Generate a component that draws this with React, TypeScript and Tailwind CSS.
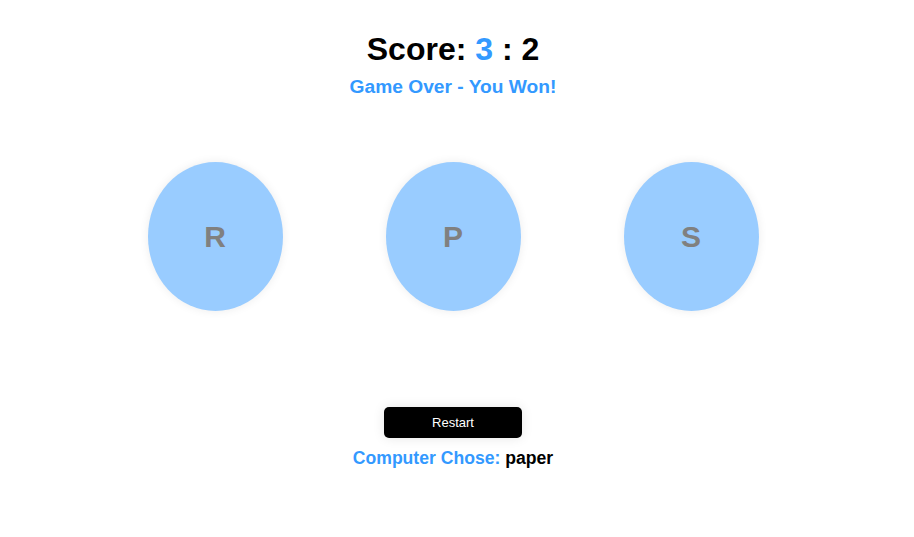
import { useState } from "react";

const choices = ["R", "P", "S"];

const App: React.FC = () => {
  const [score] = useState({ player: 3, computer: 2 });
  const [computerChoice] = useState("paper");

  return (
    <div className="min-h-screen bg-white font-['Liberation_Sans',Arial,sans-serif]">
      <div className="w-[906px] flex flex-col items-center pt-[33px]">
        {/* Score */}
        <h1 className="text-[32px] leading-none font-bold text-black">
          Score: <span className="text-[#3399ff]">{score.player}</span> : {score.computer}
        </h1>
        <p className="mt-[12px] text-[19.2px] leading-none font-bold text-[#3399ff]">
          Game Over - You Won!
        </p>

        {/* Choices */}
        <div className="mt-[66px] flex justify-center gap-[103px]">
          {choices.map((c) => (
            <button
              key={c}
              className="w-[135px] h-[149px] rounded-[50%] bg-[#99ccff] flex items-center justify-center text-[30px] font-bold text-[#808080] shadow-[0_0_10px_rgba(0,0,0,0.08)]"
            >
              {c}
            </button>
          ))}
        </div>

        {/* Restart */}
        <button className="mt-[96px] w-[138px] h-[31px] rounded-[5px] bg-black text-white text-[13px] shadow-[0_0_12px_rgba(0,0,0,0.1)]">
          Restart
        </button>
        <p className="mt-[12px] text-[17.6px] leading-none font-bold text-[#3399ff]">
          Computer Chose: <span className="text-black">{computerChoice}</span>
        </p>
      </div>
    </div>
  );
};

export default App;
